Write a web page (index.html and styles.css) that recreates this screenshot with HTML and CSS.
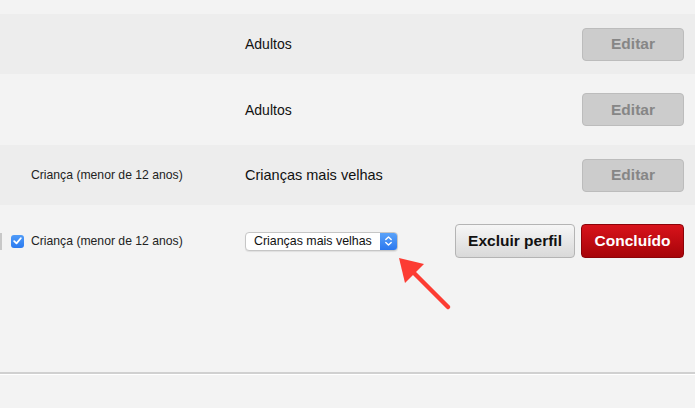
FILE: index.html
```html
<!DOCTYPE html>
<html lang="pt">
<head>
<meta charset="utf-8">
<title>Perfis</title>
<link rel="stylesheet" href="styles.css">
</head>
<body>
<div class="page">
  <div class="list">
    <div class="top-gap"></div>
    <div class="row row-dark row-short">
      <div class="col-age"></div>
      <div class="col-profile">Adultos</div>
      <div class="col-actions"><button class="btn btn-disabled">Editar</button></div>
    </div>
    <div class="row row-light row-tall">
      <div class="col-age"></div>
      <div class="col-profile">Adultos</div>
      <div class="col-actions"><button class="btn btn-disabled">Editar</button></div>
    </div>
    <div class="row row-dark row-short">
      <div class="col-age"><span class="age-text">Criança (menor de 12 anos)</span></div>
      <div class="col-profile col-profile-big">Crianças mais velhas</div>
      <div class="col-actions"><button class="btn btn-disabled">Editar</button></div>
    </div>
    <div class="row row-light row-edit">
      <div class="col-age col-age-edit">
        <span class="edge-mark"></span>
        <span class="checkbox">
          <svg width="9" height="8" viewBox="0 0 9 8"><path d="M1.2 4.2 L3.5 6.4 L7.8 1.2" fill="none" stroke="#fff" stroke-width="1.8" stroke-linecap="round" stroke-linejoin="round"/></svg>
        </span>
        <span class="age-label">Criança (menor de 12 anos)</span>
      </div>
      <div class="col-profile">
        <div class="select">
          <span class="select-text">Crianças mais velhas</span>
          <span class="select-arrows">
            <svg width="9" height="12" viewBox="0 0 9 12"><path d="M1.8 4.6 L4.5 2 L7.2 4.6 M1.8 7.4 L4.5 10 L7.2 7.4" fill="none" stroke="#fff" stroke-width="1.4" stroke-linecap="round" stroke-linejoin="round"/></svg>
          </span>
        </div>
      </div>
      <div class="col-actions">
        <button class="btn btn-gray">Excluir perfil</button>
        <button class="btn btn-red">Concluído</button>
      </div>
    </div>
  </div>
  <div class="footer-line"></div>
  <svg class="arrow" width="695" height="408" viewBox="0 0 695 408">
    <line x1="448" y1="307" x2="412" y2="271" stroke="#fc3c33" stroke-width="4.5" stroke-linecap="round"/>
    <polygon points="399,258 424,264 405,283" fill="#fc3c33"/>
  </svg>
</div>
</body>
</html>
```
FILE: styles.css
```css
html, body {
  margin: 0;
  padding: 0;
}
body {
  background: #f3f3f3;
  font-family: "Liberation Sans", Arial, sans-serif;
  color: #1a1a1a;
  width: 695px;
  height: 408px;
  overflow: hidden;
}
.page {
  position: relative;
  width: 695px;
  height: 408px;
}
.top-gap {
  height: 14px;
}
.row {
  display: flex;
  align-items: center;
}
.row-dark {
  background: #ededed;
}
.row-light {
  background: #f3f3f3;
}
.row-short {
  height: 60px;
}
.row-tall {
  height: 71px;
}
.row-edit {
  height: 72px;
}
.col-age {
  width: 245px;
  flex: none;
  display: flex;
  align-items: center;
}
.age-text {
  padding-left: 31px;
  font-size: 12.2px;
  color: #222;
}
.col-age-edit {
  position: relative;
}
.edge-mark {
  width: 2px;
  height: 17px;
  background: #c8c8c8;
  margin-right: 9px;
}
.checkbox {
  width: 13px;
  height: 13px;
  border-radius: 3px;
  background: linear-gradient(#4f9bf8, #2a7af0);
  display: flex;
  align-items: center;
  justify-content: center;
  margin-right: 7px;
}
.age-label {
  font-size: 12.2px;
  color: #222;
}
.col-profile {
  flex: 1;
  font-size: 14px;
  color: #111;
}
.col-profile-big {
  font-size: 14.5px;
}
.col-actions {
  display: flex;
  gap: 6px;
  padding-right: 11px;
}
.btn {
  height: 34px;
  border-radius: 4px;
  font-family: "Liberation Sans", Arial, sans-serif;
  font-weight: bold;
  font-size: 15.5px;
  padding: 0;
}
.btn-disabled {
  width: 102px;
  height: 33px;
  background: #cccccc;
  border: 1px solid #bcbcbc;
  color: #868686;
}
.btn-gray {
  width: 120px;
  background: linear-gradient(#f6f6f6, #d9d9d9);
  border: 1px solid #b4b4b4;
  color: #111;
}
.btn-red {
  width: 103px;
  background: linear-gradient(#d8131b, #a70409);
  border: 1px solid #8c0308;
  color: #fff;
}
.select {
  width: 151px;
  height: 17px;
  border: 1px solid #c6c6c6;
  border-radius: 4px;
  background: #fff;
  display: flex;
  align-items: center;
  box-shadow: 0 1px 1px rgba(0,0,0,0.08);
  overflow: hidden;
}
.select-text {
  flex: 1;
  padding-left: 8px;
  font-size: 12.4px;
  color: #111;
}
.select-arrows {
  width: 17px;
  height: 17px;
  background: linear-gradient(#5aa2f9, #2b78ef);
  display: flex;
  align-items: center;
  justify-content: center;
}
.footer-line {
  margin-top: 95px;
  height: 2px;
  background: #d0d0d0;
  border-bottom: 1px solid #ffffff;
}
.arrow {
  position: absolute;
  left: 0;
  top: 0;
  pointer-events: none;
}
```
